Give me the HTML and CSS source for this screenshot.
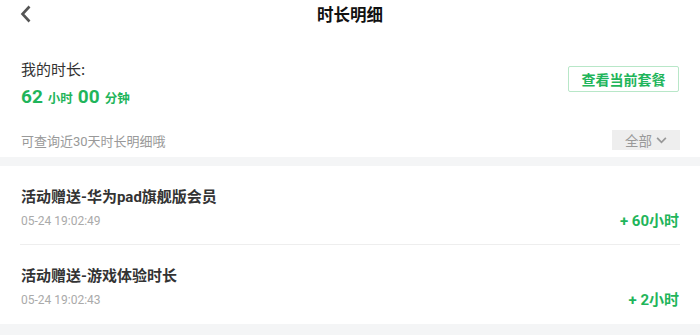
FILE: index.html
```html
<!DOCTYPE html>
<html lang="zh-CN">
<head>
<meta charset="utf-8">
<title>时长明细</title>
<link rel="stylesheet" href="styles.css">
</head>
<body>
<div class="page">
  <header class="nav">
    <div class="nav-left">
      <svg class="back" viewBox="0 0 11 18" width="11" height="18"><path d="M9.5 1.5 L2.5 9 L9.5 16.5" fill="none" stroke="#555" stroke-width="2.6" stroke-linejoin="miter"/></svg>
    </div>
    <h1 class="nav-title">时长明细</h1>
    <div class="nav-right"></div>
  </header>

  <section class="summary">
    <div class="summary-top">
      <div class="summary-info">
        <div class="label">我的时长:</div>
        <div class="amount"><span class="num">62</span><span class="unit">小时</span><span class="num">00</span><span class="unit">分钟</span></div>
      </div>
      <button class="plan-btn">查看当前套餐</button>
    </div>
    <div class="filter-row">
      <span class="hint">可查询近30天时长明细哦</span>
      <span class="filter">全部<svg class="caret" viewBox="0 0 12 8" width="11" height="7"><path d="M1 1 L6 6 L11 1" fill="none" stroke="#999" stroke-width="2"/></svg></span>
    </div>
  </section>

  <div class="band"></div>

  <ul class="records">
    <li class="record">
      <div class="record-inner">
        <div class="record-title">活动赠送-华为pad旗舰版会员</div>
        <div class="record-date">05-24 19:02:49</div>
        <div class="record-value">+ 60小时</div>
      </div>
    </li>
    <li class="record">
      <div class="record-inner last">
        <div class="record-title">活动赠送-游戏体验时长</div>
        <div class="record-date">05-24 19:02:43</div>
        <div class="record-value">+ 2小时</div>
      </div>
    </li>
  </ul>

  <div class="band bottom"></div>
</div>
</body>
</html>
```

FILE: styles.css
```css
* { box-sizing: border-box; }
html, body {
  margin: 0;
  padding: 0;
  background: #ffffff;
}
body {
  font-family: Roboto, "Noto Sans CJK SC", "Noto Sans", sans-serif;
  color: #333;
}
.page {
  width: 700px;
  height: 335px;
  overflow: hidden;
  display: flex;
  flex-direction: column;
}
.nav {
  height: 28px;
  display: grid;
  grid-template-columns: 1fr auto 1fr;
  align-items: center;
}
.nav-left {
  display: flex;
  align-items: center;
  padding-left: 20px;
}
.back { display: block; margin-top: -1px; }
.nav-title {
  margin: 0;
  font-size: 16.5px;
  font-weight: 700;
  color: #111;
  line-height: 20px;
  font-family: "Noto Sans CJK SC", sans-serif;
}
.summary {
  padding: 31px 21px 0 21px;
}
.summary-top {
  display: flex;
  justify-content: space-between;
  align-items: flex-start;
}
.label {
  font-family: "Noto Sans CJK SC", sans-serif;
  font-size: 15px;
  line-height: 20px;
  color: #333;
}
.amount {
  margin-top: 6px;
  height: 24px;
  display: flex;
  align-items: baseline;
  color: #1fb55b;
  font-weight: 700;
}
.num {
  font-size: 19px;
  line-height: 24px;
}
.unit {
  font-family: "Noto Sans CJK SC", sans-serif;
  font-size: 12.5px;
  margin: 0 5px 0 5px;
}
.plan-btn {
  margin-top: 7px;
  width: 111px;
  height: 26px;
  padding: 0;
  border: 1px solid #b8e7c8;
  border-radius: 2px;
  background: #fff;
  color: #1fb55b;
  font-family: "Noto Sans CJK SC", sans-serif;
  font-size: 14px;
  font-weight: 700;
  line-height: 24px;
}
.filter-row {
  margin-top: 21px;
  height: 20px;
  display: flex;
  justify-content: space-between;
  align-items: center;
  margin-bottom: 7px;
}
.hint {
  font-size: 13px;
  color: #999;
  font-family: Roboto, "Noto Sans CJK SC", sans-serif;
}
.filter {
  width: 68px;
  height: 20px;
  margin-right: -1px;
  background: #eeeeee;
  color: #999;
  font-family: "Noto Sans CJK SC", sans-serif;
  font-size: 13.5px;
  display: flex;
  align-items: center;
  justify-content: center;
  gap: 4px;
}
.caret { display: block; }
.band {
  height: 9px;
  background: #f4f5f6;
  flex: none;
}
.band.bottom { flex: 1; }
.records {
  list-style: none;
  margin: 0;
  padding: 0;
}
.record {
  padding: 0 20px;
}
.record-inner {
  display: grid;
  grid-template-columns: 1fr auto;
  grid-template-rows: 20px 16px;
  row-gap: 6px;
  padding: 21px 1px 16px 1px;
  border-bottom: 1px solid #eeeeee;
  height: 79px;
}
.record-inner.last {
  border-bottom: none;
}
.record-title {
  grid-column: 1;
  grid-row: 1;
  font-family: Roboto, "Noto Sans CJK SC", sans-serif;
  font-size: 15px;
  font-weight: 700;
  line-height: 20px;
  color: #333;
}
.record-date {
  grid-column: 1;
  grid-row: 2;
  font-size: 12px;
  line-height: 16px;
  color: #aaa;
}
.record-value {
  grid-column: 2;
  grid-row: 2;
  font-size: 15px;
  font-weight: 700;
  line-height: 16px;
  color: #1fb55b;
  font-family: Roboto, "Noto Sans CJK SC", sans-serif;
}
```
